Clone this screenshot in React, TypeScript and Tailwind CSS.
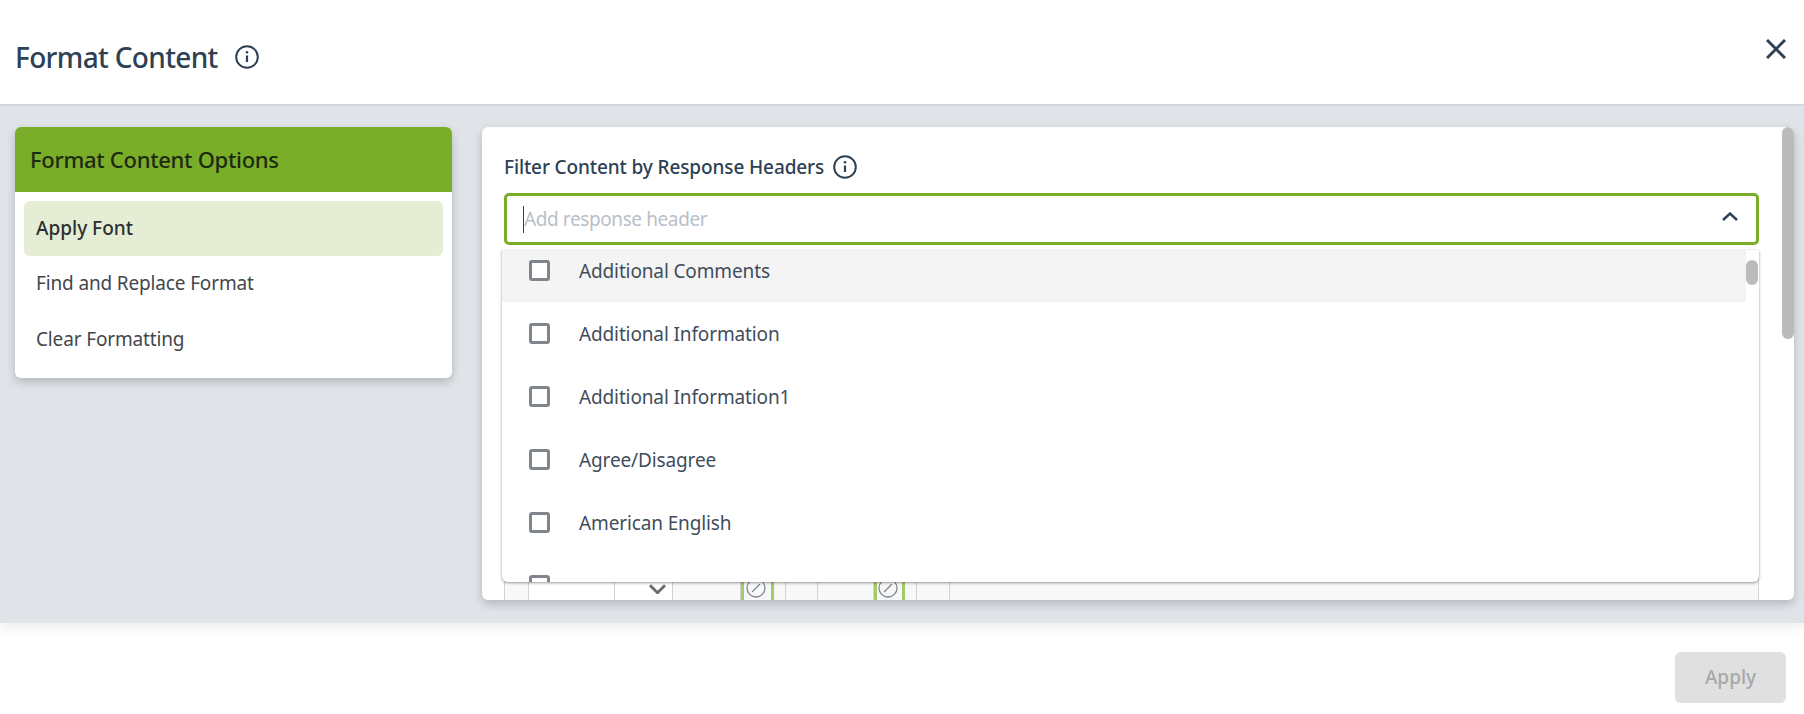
const font = "font-['Noto_Sans',sans-serif]";

function InfoIcon({ className }: { className?: string }) {
  return (
    <svg viewBox="0 0 24 24" fill="none" stroke="#2e4053" className={className}>
      <circle cx="12" cy="12" r="10.8" strokeWidth="2" />
      <path d="M12 10.5v6.5" strokeWidth="2.2" />
      <circle cx="12" cy="7.3" r="1.3" fill="#2e4053" stroke="none" />
    </svg>
  );
}

function Check() {
  return <span className="block w-[21px] h-[21px] shrink-0 border-[3px] border-[#7f858b] rounded-[3px] bg-white" />;
}

const rows = ["Additional Comments", "Additional Information", "Additional Information1", "Agree/Disagree", "American English", ""];

function Blocked() {
  return (
    <svg viewBox="0 0 20 20" className="w-[20px] h-[20px] -mt-[16px] mb-[2px] mr-[3px]" fill="none" stroke="#7f8993" strokeWidth="1.3">
      <circle cx="10" cy="10" r="9" />
      <path d="M6 14 14 6" />
    </svg>
  );
}

function Cell({ w, white, green, children }: { w: number; white?: boolean; green?: boolean; children?: React.ReactNode }) {
  return (
    <div
      className={`shrink-0 flex justify-center items-end box-border h-full border-r border-[#d4d4d4] ${white ? "bg-white" : ""} ${green ? "border-l-[3px] border-l-[#a4cb6a] border-r-[3px] border-r-[#a4cb6a]" : ""}`}
      style={{ width: w }}
    >
      {children}
    </div>
  );
}

export default function App() {
  return (
    <div className={`w-[1804px] h-[714px] flex flex-col bg-white overflow-hidden ${font}`}>
      <header className="relative z-10 h-[104px] shrink-0 bg-white flex items-center justify-between pl-[15px] pr-[18px] shadow-[0_1px_2px_rgba(0,0,0,0.1)]">
        <div className="flex items-center gap-[17px] mt-[10px]">
          <h1 className="text-[28px] leading-none font-medium text-[#2e4053] tracking-[-0.65px]">Format Content</h1>
          <InfoIcon className="w-[24px] h-[24px]" />
        </div>
        <svg viewBox="0 0 20 20" className="w-[20px] h-[20px] -mt-[6px]" fill="none" stroke="#2e4053" strokeWidth="3">
          <path d="M1 1 19 19M19 1 1 19" />
        </svg>
      </header>

      <main className="relative h-[519px] shrink-0 bg-[#e0e3e8] flex items-start pt-[23px] pl-[15px] gap-[30px] shadow-[0_5px_10px_rgba(0,0,0,0.07)]">
        <section className="w-[437px] h-[251px] shrink-0 bg-white rounded-[6px] overflow-hidden shadow-[0_4px_10px_rgba(0,0,0,0.2)]">
          <div className="h-[65px] bg-[#7bae28] flex items-center pl-[15px] text-[22px] font-medium text-[#1c2a12] tracking-[-0.3px]">
            Format Content Options
          </div>
          <div className="px-[9px] pt-[9px] text-[19px] text-[#43474b] tracking-[-0.15px]">
            <div className="h-[55px] bg-[#e5eed4] rounded-[6px] flex items-center pl-[12px] font-medium text-[#2b2f33] tracking-normal">Apply Font</div>
            <div className="h-[54px] flex items-center pl-[12px]">Find and Replace Format</div>
            <div className="h-[58px] flex items-center pl-[12px]">Clear Formatting</div>
          </div>
        </section>

        <section className="relative w-[1312px] h-[473px] shrink-0 bg-white rounded-[6px] shadow-[0_4px_10px_rgba(0,0,0,0.2)] flex flex-col overflow-hidden pt-[28px]">
          <div className="pl-[22px] pr-[35px] shrink-0">
            <div className="flex items-center gap-[9px] h-[24px]">
              <span className="text-[19px] font-medium text-[#2e4053] tracking-[-0.12px]">Filter Content by Response Headers</span>
              <InfoIcon className="w-[24px] h-[24px]" />
            </div>
            <div className="mt-[14px] h-[52px] border-[3px] border-[#7bae28] rounded-[5px] flex items-center justify-between pl-[16px] pr-[18px]">
              <div className="flex items-center">
                <span className="block w-px h-[27px] bg-[#2e4053]" />
                <span className="text-[19px] text-[#b9c0c8] tracking-[-0.4px]">Add response header</span>
              </div>
              <svg viewBox="0 0 16 9" className="w-[16px] h-[9px] -mt-[5px]" fill="none" stroke="#2e4053" strokeWidth="2.4">
                <path d="M1 8 8 1.5 15 8" />
              </svg>
            </div>
          </div>

          <div className="mt-auto h-[215px] ml-[22px] w-[1255px] shrink-0 flex bg-[#f8f8f8] border-l border-[#d4d4d4]">
            <Cell w={24} />
            <Cell w={86} white />
            <Cell w={58} white>
              <svg viewBox="0 0 18 10" className="w-[17px] h-[10px] mb-[6px] ml-[28px]" fill="none" stroke="#6b6b6b" strokeWidth="3">
                <path d="M1 1 9 9 17 1" />
              </svg>
            </Cell>
            <Cell w={68} />
            <Cell w={33} green><Blocked /></Cell>
            <Cell w={12} />
            <Cell w={32} />
            <Cell w={56} />
            <Cell w={31} green><Blocked /></Cell>
            <Cell w={12} />
            <Cell w={33} />
            <div className="flex-1 border-r border-[#d4d4d4]" />
          </div>

          <div className="absolute right-0 top-0 w-[12px] h-[212px] rounded-[6px] bg-[#bbbbbb]" />

          <div className="absolute left-[20px] top-[123px] w-[1257px] h-[332px] bg-white rounded-b-[6px] shadow-[0_1px_3px_rgba(0,0,0,0.4)] overflow-hidden">
            <div className="-mt-[11px] w-[1244px]">
              {rows.map((r, i) => (
                <div key={i} className={`h-[63px] flex items-center gap-[29px] pl-[27px] text-[19px] text-[#3f4d5c] tracking-[-0.13px] ${i === 0 ? "bg-[#f4f4f4]" : ""}`}>
                  <Check />
                  <span className="mt-[1px]">{r}</span>
                </div>
              ))}
            </div>
            <div className="absolute right-px top-[10px] w-[12px] h-[25px] rounded-[6px] bg-[#bbbbbb]" />
          </div>
        </section>
      </main>

      <footer className="flex-1 flex items-center justify-end pr-[18px] pt-[17px]">
        <button className="w-[111px] h-[51px] rounded-[6px] bg-[#e0e0e0] text-[19px] font-medium text-[#a8a8a8]">Apply</button>
      </footer>
    </div>
  );
}
